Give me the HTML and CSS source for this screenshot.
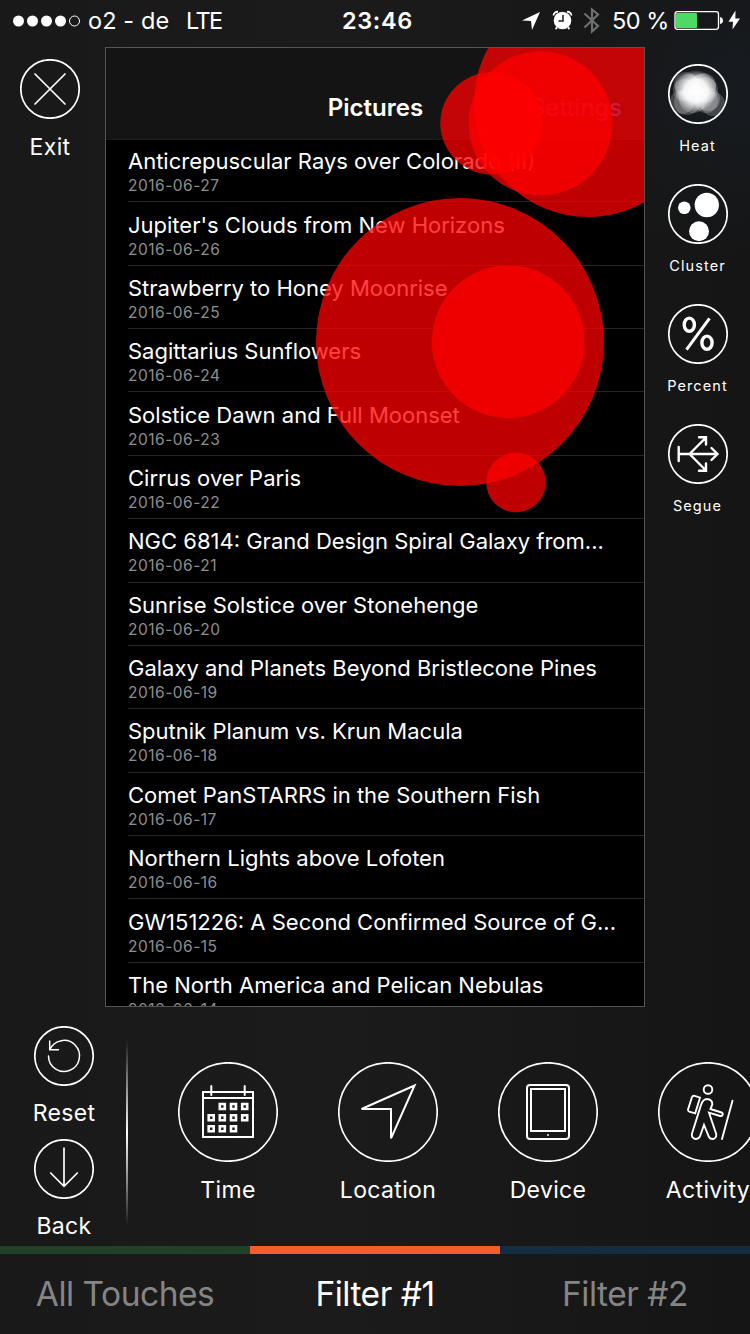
FILE: index.html
```html
<!DOCTYPE html>
<html lang="en">
<head>
<meta charset="utf-8">
<title>Touch filters</title>
<link rel="stylesheet" href="styles.css">
</head>
<body>
<div class="app">
  <header class="status">
    <div class="status-left">
      <svg class="signal" width="68" height="12" viewBox="0 0 68 12"><g fill="#fff"><circle cx="5.5" cy="6" r="5.5"/><circle cx="19.5" cy="6" r="5.5"/><circle cx="33.5" cy="6" r="5.5"/><circle cx="47.5" cy="6" r="5.5"/></g><circle cx="61.5" cy="6" r="5" fill="none" stroke="#fff"/></svg>
      <span class="carrier">o2 - de</span><span class="network">LTE</span>
    </div>
    <span class="clock">23:46</span>
    <svg class="status-icons" width="80" height="40" viewBox="520 0 80 40">
      <path d="M540 12L522 20.5L531 21L532 30Z" fill="#fff"/>
      <circle cx="562.5" cy="20.5" r="8.8" fill="#fff"/>
      <path d="M563 15v6h-4.500" fill="none" stroke="#1a1a1a" stroke-width="1.500"/>
      <path d="M553.500 15.500a4 4 0 0 1 4.500-3.700M571.500 15.500a4 4 0 0 0-4.500-3.700M557 27.500l-1.500 1.500M568 27.500l1.500 1.500" fill="none" stroke="#fff" stroke-width="1.800"/>
      <path d="M584.500 13.500L598 26L592 31.500V9.500L598 14.500L584.500 27.500" fill="none" stroke="#6e6f6f" stroke-width="2.200"/>
    </svg>
    <span class="battery-text">50 %</span>
    <svg class="battery" width="68" height="40" viewBox="673 0 68 40">
      <rect x="675" y="11.700" width="43.500" height="17.600" rx="2.500" fill="none" stroke="#fff" stroke-width="1.300"/>
      <rect x="676" y="13" width="21" height="15" rx="1" fill="#4cd964"/>
      <path d="M720 17q3 .5 3 3.500t-3 3.500z" fill="#fff"/>
      <path d="M735.500 10.500L728.500 21.700H733L732.500 29.500L740 18.500H735.300Z" fill="#fff"/>
    </svg>
  </header>

  <main class="stage">
    <aside class="side side-left">
      <button class="tool"><svg class="icon" width="60" height="60" viewBox="-30 -30 60 60"><circle r="29.200"/><path d="M-15-15L15 15M15-15L-15 15"/></svg><span class="label exit-label">Exit</span></button>
    </aside>

    <section class="panel">
      <div class="nav"><span class="nav-title">Pictures</span><span class="nav-action">Settings</span></div>
      <ul class="list">
        <li class="row"><span class="title">Anticrepuscular Rays over Colorado (II)</span><time class="date">2016-06-27</time></li>
        <li class="row"><span class="title">Jupiter's Clouds from New Horizons</span><time class="date">2016-06-26</time></li>
        <li class="row"><span class="title">Strawberry to Honey Moonrise</span><time class="date">2016-06-25</time></li>
        <li class="row"><span class="title">Sagittarius Sunflowers</span><time class="date">2016-06-24</time></li>
        <li class="row"><span class="title">Solstice Dawn and Full Moonset</span><time class="date">2016-06-23</time></li>
        <li class="row"><span class="title">Cirrus over Paris</span><time class="date">2016-06-22</time></li>
        <li class="row"><span class="title">NGC 6814: Grand Design Spiral Galaxy from...</span><time class="date">2016-06-21</time></li>
        <li class="row"><span class="title">Sunrise Solstice over Stonehenge</span><time class="date">2016-06-20</time></li>
        <li class="row"><span class="title">Galaxy and Planets Beyond Bristlecone Pines</span><time class="date">2016-06-19</time></li>
        <li class="row"><span class="title">Sputnik Planum vs. Krun Macula</span><time class="date">2016-06-18</time></li>
        <li class="row"><span class="title">Comet PanSTARRS in the Southern Fish</span><time class="date">2016-06-17</time></li>
        <li class="row"><span class="title">Northern Lights above Lofoten</span><time class="date">2016-06-16</time></li>
        <li class="row"><span class="title">GW151226: A Second Confirmed Source of G...</span><time class="date">2016-06-15</time></li>
        <li class="row"><span class="title">The North America and Pelican Nebulas</span><time class="date">2016-06-14</time></li>
      </ul>
      <svg class="touches" viewBox="106 48 538 958">
        <circle cx="588" cy="103" r="114"/><circle cx="540.500" cy="123.300" r="72"/><circle cx="491.300" cy="123.300" r="51"/>
        <circle cx="460" cy="342" r="144"/><circle cx="508.200" cy="341.700" r="76.300"/><circle cx="516" cy="482.500" r="29.800"/>
      </svg>
    </section>

    <aside class="side side-right">
      <button class="tool"><svg class="icon" width="60" height="60" viewBox="-30 -30 60 60">
        <defs><radialGradient id="glow"><stop offset="0" stop-color="#fff"/><stop offset=".55" stop-color="#fff" stop-opacity=".9"/><stop offset="1" stop-color="#fff" stop-opacity="0"/></radialGradient></defs>
        <g class="heat"><circle cx="-12" cy="-10" r="12"/><circle cx="-14" cy="-4" r="11"/><circle cx="-10" cy="-7" r="13"/><circle cx="-16" cy="8" r="12"/><circle cx="-11" cy="8" r="13"/><circle cx="-5" cy="5" r="14"/><circle cx="6" cy="-9" r="12"/><circle cx="4" cy="-6" r="14"/><circle cx="7" cy="-4" r="13"/><circle cx="10" cy="5" r="12"/><circle cx="15" cy="10" r="12"/><circle cx="8" cy="7" r="12"/></g>
        <circle class="plain" cx="-2" cy="-3" r="21" fill="url(#glow)"/><circle r="29.200"/></svg><span class="label">Heat</span></button>
      <button class="tool"><svg class="icon" width="60" height="60" viewBox="-30 -30 60 60"><circle r="29.200"/><g class="solid"><circle cx="-13.700" cy="-6.200" r="6.300"/><circle cx="8.800" cy="-9" r="12.200"/><circle cx="1" cy="17.300" r="10"/></g></svg><span class="label">Cluster</span></button>
      <button class="tool"><svg class="icon" width="60" height="60" viewBox="-30 -30 60 60"><circle r="29.200"/><g stroke-width="3.400" stroke-linecap="butt"><ellipse cx="-8.700" cy="-9.300" rx="5.100" ry="6.600"/><ellipse cx="9" cy="8.700" rx="5.100" ry="6.600"/><path d="M-11.500 15.700L11.500-15.700" stroke-width="3"/></g></svg><span class="label">Percent</span></button>
      <button class="tool"><svg class="icon" width="60" height="60" viewBox="-30 -30 60 60"><circle r="29.200"/><path stroke-width="2.400" d="M-19.300-7V7M-19.300 0H19.500M13.500-6L19.500 0L13.500 6M-8.500 0L8-16.500M1-16.800H8V-9.500M-8.500 0L8 16.500M1 16.800H8V9.500"/></svg><span class="label">Segue</span></button>
    </aside>
  </main>

  <section class="filters">
    <div class="actions">
      <button class="tool"><svg class="icon" width="60" height="60" viewBox="-30 -30 60 60"><circle r="29.200"/><path stroke-width="1.500" d="M-15.500 0A15.500 15.500 0 1 0-14.200-6.300M-14.300-15V-6.300H-5.500"/></svg><span class="label">Reset</span></button>
      <button class="tool"><svg class="icon" width="60" height="60" viewBox="-30 -30 60 60"><circle r="29.200"/><path d="M0-21V17.300M-13.300 4L0 17.300L13.300 4"/></svg><span class="label">Back</span></button>
    </div>
    <div class="divider"></div>
    <nav class="categories">
      <button class="tool"><svg class="icon" width="100" height="100" viewBox="-50 -50 100 100"><circle r="49.200"/><path stroke-width="2" d="M-25-20H25V25H-25ZM-25-14H25M-16.700-26V-17M16.700-26V-17"/><path class="days" d="M-8.200-8h5v5h-5zM3-8h5v5h-5zM14.200-8h5v5h-5zM-19.300 3.200h5v5h-5zM-8.200 3.200h5v5h-5zM3 3.200h5v5h-5zM14.200 3.200h5v5h-5zM-19.300 14.300h5v5h-5zM-8.200 14.300h5v5h-5zM3 14.300h5v5h-5z"/></svg><span class="label">Time</span></button>
      <button class="tool"><svg class="icon" width="100" height="100" viewBox="-50 -50 100 100"><circle r="49.200"/><path stroke-width="2" d="M26.500-26.500L3 26.300V-3H-26.500Z"/></svg><span class="label">Location</span></button>
      <button class="tool"><svg class="icon" width="100" height="100" viewBox="-50 -50 100 100"><circle r="49.200"/><rect x="-21" y="-27" width="42" height="54" rx="3" stroke-width="2"/><path stroke-width="2" d="M-17-23H17V19H-17Z"/><path class="plain" fill="#bbb" d="M-1 22h2v2h-2z"/></svg><span class="label">Device</span></button>
      <button class="tool"><svg class="icon" width="100" height="100" viewBox="-50 -50 100 100"><circle r="49.200"/><g stroke-width="1.900"><circle cy="-22.500" r="4.300"/><path d="M-8-14.300L-14-16.300Q-15.500-16.300-16-15L-20-2.500Q-20.300-.8-18.800-.3L-12.800 1.300ZM2.500-3L13.500 .500Q15.500 1.300 14.500 3Q13.800 4.300 12 4L1 .700L8.200 22Q8.800 26 5 27Q2 27.200 1 25L-4 13L-8 24.300Q-9 27-12.500 27Q-17 26-16 21.500L-7-7Q-5-13-1-13Q4.500-12.500 4.300-7.500ZM24.500-11.300L14 27"/></g></svg><span class="label">Activity</span></button>
    </nav>
  </section>

  <footer class="tabs">
    <button class="tab tab-all">All Touches</button>
    <button class="tab tab-one">Filter #1</button>
    <button class="tab tab-two">Filter #2</button>
  </footer>
</div>
</body>
</html>
```

FILE: styles.css
```css
* { box-sizing: border-box; }
body { margin: 0; background: #1a1a1a; color: #fff; font-family: Inter, "Liberation Sans", sans-serif; }
button { padding: 0; border: 0; background: none; color: inherit; font: inherit; }

.app {
  width: 750px; height: 1334px; overflow: hidden;
  display: flex; flex-direction: column;
  background: radial-gradient(circle at 740px 90px, #171b20 0, rgba(23, 27, 32, 0) 170px), linear-gradient(90deg, #191919, #1b1b1b 45%, #151515);
}

.status { height: 47px; display: grid; grid-template-columns: 342px 178px 80px 73px 1fr; align-items: start; white-space: nowrap; font-size: 23.5px; line-height: 41px; }
.status-left { display: flex; padding-left: 13px; }
.signal { margin-top: 15px; }
.carrier { width: 105px; padding-left: 7px; letter-spacing: 0.1px; }
.network { letter-spacing: -1.6px; }
.clock { font-weight: 600; letter-spacing: 0.6px; }
.battery-text { padding-left: 12px; letter-spacing: -0.5px; }

.stage { height: 960px; display: flex; }
.side { width: 105px; display: flex; flex-direction: column; }
.side-left { padding: 12px 5px 0 0; }
.side-right { padding-top: 17px; gap: 30px; }
.tool { display: flex; flex-direction: column; align-items: center; }
.label { font-size: 23px; line-height: 30px; letter-spacing: 0.35px; white-space: nowrap; }
.exit-label { margin-top: 13px; }
.side-right .label { font-size: 14.5px; letter-spacing: 1.1px; line-height: 20px; margin-top: 12px; height: 18px; }
.side-right .icon { margin-left: 1px; }
.icon { display: block; fill: none; stroke: #fff; stroke-width: 1.7; stroke-linecap: round; }
.solid { fill: #fff; stroke: none; }
.plain { stroke: none; }
.heat { fill: #fff; fill-opacity: 0.2; stroke: none; }
.days { stroke-width: 2.6; stroke-linecap: butt; }

.panel { position: relative; width: 540px; height: 960px; border: 1px solid #555; background: #000; overflow: hidden; }
.nav { height: 92px; display: grid; grid-template-columns: 1fr auto 1fr; padding: 43px 22px 0 23px; background: #141414; border-bottom: 1px solid #1c1c1c; line-height: 34px; font-size: 24px; }
.nav-title { grid-column: 2; font-weight: 600; }
.nav-action { justify-self: end; color: #3c7cff; }
.list { list-style: none; margin: -1px 0 0; padding: 0 0 0 22px; }
.row { height: 63.36px; padding-top: 8.2px; display: flex; flex-direction: column; border-bottom: 1px solid #262626; white-space: nowrap; }
.title { font-size: 22px; line-height: 28px; letter-spacing: 0; }
.date { font-size: 15.5px; line-height: 21.6px; color: #8e8e8e; letter-spacing: 0.5px; }
.touches { position: absolute; inset: 0; width: 538px; height: 958px; fill: #f00; fill-opacity: 0.75; }

.filters { height: 239px; display: flex; }
.actions { width: 126px; padding: 19px 0 0 2px; display: flex; flex-direction: column; gap: 11px; }
.actions .label { margin-top: 12px; }
.divider { width: 2px; height: 186px; margin-top: 33px; background: linear-gradient(transparent, #fff 50%, transparent); }
.categories { flex: 1; overflow: hidden; display: flex; padding: 55px 0 0 20px; }
.categories .tool { width: 160px; flex: none; }
.categories .label { margin-top: 13px; }

.tabs { height: 88px; display: grid; grid-template-columns: repeat(3, 1fr); }
.tab { border-top: 8px solid; font-size: 33.5px; line-height: 80px; letter-spacing: -0.5px; text-align: center; white-space: nowrap; }
.tab-all { border-color: #234126; color: #858585; }
.tab-one { border-color: #f45c29; color: #fff; }
.tab-two { border-color: #132e42; color: #858585; }
```
